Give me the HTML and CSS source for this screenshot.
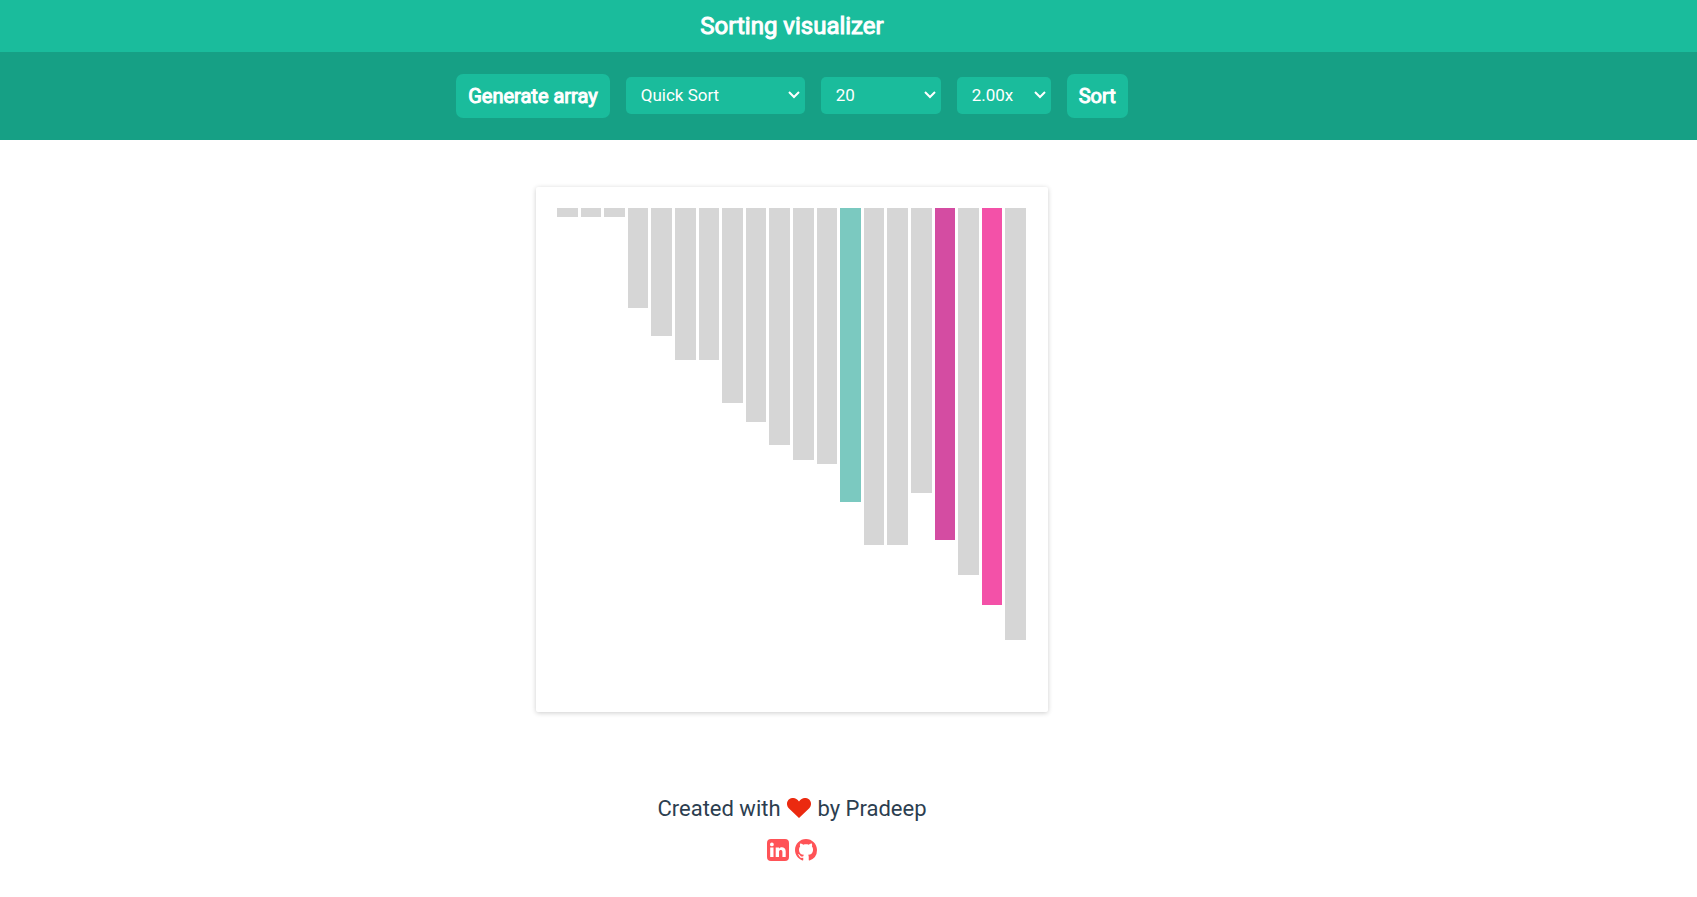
FILE: index.html
```html
<!DOCTYPE html>
<html lang="en">
<head>
<meta charset="utf-8">
<title>Sorting visualizer</title>
<link rel="stylesheet" href="styles.css">
</head>
<body>
<header class="title-bar"><h1 class="title">Sorting visualizer</h1></header>
<nav class="toolbar">
  <button class="btn" type="button">Generate array</button>
  <select class="select select-algo" aria-label="Algorithm"><option>Quick Sort</option></select>
  <select class="select select-size" aria-label="Array size"><option>20</option></select>
  <select class="select select-speed" aria-label="Speed"><option>2.00x</option></select>
  <button class="btn" type="button">Sort</button>
</nav>
<main class="stage">
  <div class="chart">
    <div class="bar" style="height:9px"></div>
    <div class="bar" style="height:9px"></div>
    <div class="bar" style="height:9px"></div>
    <div class="bar" style="height:100px"></div>
    <div class="bar" style="height:128px"></div>
    <div class="bar" style="height:152px"></div>
    <div class="bar" style="height:152px"></div>
    <div class="bar" style="height:195px"></div>
    <div class="bar" style="height:214px"></div>
    <div class="bar" style="height:237px"></div>
    <div class="bar" style="height:252px"></div>
    <div class="bar" style="height:256px"></div>
    <div class="bar pivot" style="height:294px"></div>
    <div class="bar" style="height:337px"></div>
    <div class="bar" style="height:337px"></div>
    <div class="bar" style="height:285px"></div>
    <div class="bar left" style="height:332px"></div>
    <div class="bar" style="height:367px"></div>
    <div class="bar right" style="height:397px"></div>
    <div class="bar" style="height:432px"></div>
  </div>
</main>
<footer class="footer">
  <p class="credit">Created with
    <svg class="heart" viewBox="0 0 24 20" role="img" aria-label="love"><path d="M12 20 2 10.500C-1 7.500-.5 3 2.500 1 5.500-1 9.500 0 12 3.500 14.500 0 18.500-1 21.500 1 24.500 3 25 7.500 22 10.500Z"/></svg>
    by Pradeep</p>
  <div class="links">
    <a class="link" href="#linkedin" aria-label="LinkedIn"><svg viewBox="0 0 22 22"><path fill-rule="evenodd" d="M4 0H18Q22 0 22 4V18Q22 22 18 22H4Q0 22 0 18V4Q0 0 4 0ZM3.200 8.500V18H6.500V8.500ZM4.900 3.500A1.900 1.900 0 1 0 4.900 7.300 1.900 1.900 0 1 0 4.900 3.500ZM8.700 8.500V18H12V13C12 10.500 15.400 10.400 15.400 13V18H18.700V12.300C18.700 7.800 13.800 7.200 12 9.700V8.500Z"/></svg></a>
    <a class="link" href="#github" aria-label="GitHub"><svg viewBox="0 0 16 16"><path d="M8 0C3.580 0 0 3.580 0 8c0 3.540 2.290 6.530 5.470 7.590.4.070.55-.17.55-.38 0-.19-.01-.82-.01-1.490-2.010.37-2.530-.49-2.690-.94-.09-.23-.48-.94-.82-1.130-.28-.15-.68-.52-.01-.53.63-.01 1.080.58 1.230.82.72 1.210 1.870.87 2.330.66.07-.52.28-.87.51-1.070-1.780-.2-3.640-.89-3.640-3.950 0-.87.31-1.590.82-2.150-.08-.2-.36-1.020.08-2.120 0 0 .67-.21 2.200.82.64-.18 1.320-.27 2-.27s1.360.09 2 .27c1.530-1.040 2.200-.82 2.200-.82.44 1.100.16 1.920.08 2.120.51.56.82 1.270.82 2.150 0 3.070-1.870 3.750-3.650 3.950.29.25.54.73.54 1.480 0 1.070-.01 1.930-.01 2.200 0 .21.15.46.55.38A8.010 8.010 0 0 0 16 8c0-4.420-3.580-8-8-8Z"/></svg></a>
  </div>
</footer>
</body>
</html>
```
FILE: styles.css
```css
:root {
  --side-space: 113px;
}
* {
  box-sizing: border-box;
}
body {
  margin: 0;
  background: #fff;
  color: #2c3e50;
  font-family: Roboto, "Liberation Sans", sans-serif;
}
.title-bar {
  padding: 10px var(--side-space) 10px 0;
  background: #1abc9c;
}
.title {
  margin: 0;
  color: #fff;
  font-size: 24px;
  font-weight: 400;
  line-height: 32px;
  text-align: center;
  -webkit-text-stroke: 1px #fff;
}
.toolbar {
  display: flex;
  align-items: center;
  justify-content: center;
  gap: 16px;
  padding: 22px var(--side-space) 22px 0;
  background: #16a085;
}
.btn {
  padding: 6px 12px;
  border: 0;
  border-radius: 7px;
  background: #1abc9c;
  color: #fff;
  font: 20px/32px Roboto, "Liberation Sans", sans-serif;
  -webkit-text-stroke: 1px #fff;
}
.select {
  appearance: none;
  height: 37px;
  margin-bottom: 2px;
  padding: 0 24px 0 15px;
  border: 0;
  border-radius: 5px;
  background: #1abc9c url("data:image/svg+xml,%3Csvg xmlns='http://www.w3.org/2000/svg' width='12' height='8' fill='none' stroke='white' stroke-width='2'%3E%3Cpath d='M1 1l5 5 5-5'/%3E%3C/svg%3E") no-repeat right 5px center;
  color: #fff;
  font: 17px Roboto, "Liberation Sans", sans-serif;
}
.select-algo {
  width: 179px;
}
.select-size {
  width: 120px;
}
.select-speed {
  width: 94px;
}
.stage {
  display: flex;
  justify-content: center;
  padding: 47px var(--side-space) 81px 0;
}
.chart {
  display: flex;
  align-items: flex-start;
  gap: 3px;
  width: 512px;
  min-height: 525px;
  padding: 21px 22px 21px 21px;
  border-radius: 2px;
  box-shadow: 0 1px 5px rgba(0, 0, 0, 0.2);
}
.bar {
  flex: 1;
  background: #d6d6d6;
}
.pivot {
  background: #7bc9c0;
}
.left {
  background: #d44ca2;
}
.right {
  background: #f351a8;
}
.footer {
  padding-right: var(--side-space);
  text-align: center;
}
.credit {
  margin: 0;
  font-size: 22px;
  line-height: 32px;
}
.heart {
  width: 24px;
  height: 20px;
  margin: 0 1px;
  fill: #eb2a10;
  vertical-align: -2px;
}
.links {
  display: flex;
  justify-content: center;
  gap: 6px;
  margin-top: 14px;
}
.link svg {
  display: block;
  width: 22px;
  height: 22px;
  fill: #ff5357;
}
```
